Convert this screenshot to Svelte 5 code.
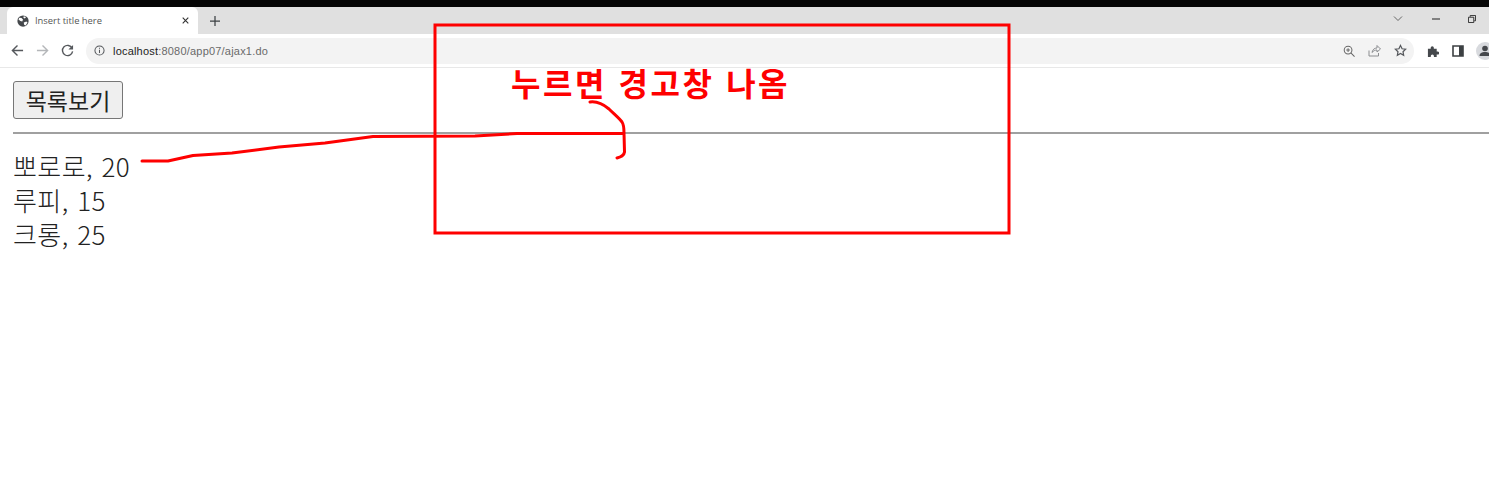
<script>
  const people = ['뽀로로, 20', '루피, 15', '크롱, 25'];
</script>

<div class="page">
  <div class="blackbar"></div>
  <div class="tabstrip">
    <div class="tab">
      <svg class="fav" viewBox="0 0 16 16" width="12" height="12"><circle cx="8" cy="8" r="7.500" fill="#45484c"/><path d="M3 3.500l3 .5 2 2-1 2.500-2.500-.5L2 6zM9 1.500l3 1-1.500 2-2-1zM9 10l3.500-1.500L14 10l-2.500 4-2-1z" fill="#fff"/></svg>
      <span class="tabtitle">Insert title here</span>
      <svg class="tabx" viewBox="0 0 10 10" width="7" height="7"><path d="M1 1l8 8M9 1l-8 8" stroke="#333" stroke-width="1.600"/></svg>
    </div>
    <svg class="plus" viewBox="0 0 12 12" width="10" height="10"><path d="M6 0v12M0 6h12" stroke="#3c4043" stroke-width="1.500"/></svg>
    <div class="spacer"></div>
    <svg class="winicon chev" viewBox="0 0 10 6" width="10" height="6"><path d="M1 .5l4 4 4-4" fill="none" stroke="#666" stroke-width="1"/></svg>
    <svg class="winicon min" viewBox="0 0 8 2" width="8" height="2"><path d="M0 1h8" stroke="#222" stroke-width="1"/></svg>
    <svg class="winicon rest" viewBox="0 0 9 9" width="8" height="8"><path d="M2.500 2V.5h6v6H7M.5 2.500h6v6h-6z" fill="none" stroke="#222" stroke-width="1"/></svg>
  </div>
  <div class="toolbar">
    <svg class="nav" viewBox="0 0 14 14" width="13" height="13"><path d="M13 7H2M7 1.500L1.500 7 7 12.500" fill="none" stroke="#55585c" stroke-width="1.500"/></svg>
    <svg class="nav" viewBox="0 0 14 14" width="13" height="13"><path d="M1 7h11M7 1.500L12.500 7 7 12.500" fill="none" stroke="#b4b6b9" stroke-width="1.500"/></svg>
    <svg class="nav" viewBox="0 0 14 14" width="13" height="13"><path d="M12 4.500A5.500 5.500 0 1 0 12.500 8" fill="none" stroke="#55585c" stroke-width="1.500"/><path d="M13 1v5H8z" fill="#55585c"/></svg>
    <div class="omnibox">
      <svg class="info" viewBox="0 0 12 12" width="11" height="11"><circle cx="6" cy="6" r="5" fill="none" stroke="#55585c" stroke-width="1.100"/><path d="M6 5.200v3.600M6 3v1.200" stroke="#55585c" stroke-width="1.100"/></svg>
      <span class="url"><span class="host">localhost</span>:8080/app07/ajax1.do</span>
      <div class="spacer"></div>
      <svg viewBox="0 0 13 13" width="12" height="12"><circle cx="5.500" cy="5.500" r="4.200" fill="none" stroke="#666" stroke-width="1.100"/><path d="M8.500 8.500L12.500 12.500M3.500 5.500h4M5.500 3.500v4" stroke="#666" stroke-width="1.100"/></svg>
      <svg viewBox="0 0 13 13" width="13" height="13"><path d="M1 6.500V12h9.500V9M4 8.500C4.500 5.500 6.500 4 9 4V1.500L12.500 5 9 8V6c-2 0-3.500 .8-5 2.500z" fill="none" stroke="#8b8d90" stroke-width="1"/></svg>
      <svg viewBox="0 0 14 14" width="13" height="13"><path d="M7 1.500l1.700 3.600 3.800.5-2.800 2.700.7 3.900L7 10.300l-3.400 1.900.7-3.900L1.500 5.600l3.800-.5z" fill="none" stroke="#55585c" stroke-width="1.300"/></svg>
    </div>
    <svg class="ext" viewBox="0 0 13 13" width="12" height="12"><path d="M1 4h3V3a1.700 1.700 0 0 1 3.400 0v1h3.100v3h1a1.700 1.700 0 0 1 0 3.400h-1V13H7.500v-1a1.700 1.700 0 0 0-3.400 0v1H1z" fill="#45484c"/></svg>
    <svg class="side" viewBox="0 0 12 12" width="12" height="12"><path d="M1 1h10v10H1z" fill="none" stroke="#3c4043" stroke-width="1.600"/><path d="M7 1h4v10H7z" fill="#3c4043"/></svg>
    <div class="avatar">
      <svg viewBox="0 0 14 14" width="14" height="14"><circle cx="7" cy="4.500" r="2.800" fill="#45484c"/><path d="M1.500 12c0-3 2.500-4 5.500-4s5.500 1 5.500 4z" fill="#45484c"/></svg>
    </div>
  </div>
  <main class="content">
    <button class="list">목록보기</button>
    <hr />
    <div class="people">
      {#each people as p}
        <div>{p}</div>
      {/each}
    </div>
  </main>

  <div class="note">누르면 경고창 나옴</div>
  <svg class="ink" width="1489" height="490" viewBox="0 0 1489 490">
    <rect x="435" y="25" width="574" height="208" fill="none" stroke="#fe0000" stroke-width="3"/>
    <path d="M142 161L168 161L193 155.500L232 153L279 147L325 143L373 136.500L475 136L517 133.500L623 133.500M590 102C597 101 603 104 609 109C614 114 619 118 622 122C624 125 624 128 624 133L624.500 152C624 156 621 157 617 158" fill="none" stroke="#fe0000" stroke-width="3" stroke-linecap="round" stroke-linejoin="round"/>
  </svg>
</div>

<style>
  :global(body) { margin: 0; background: #fff; overflow: hidden; }
  .page { position: relative; width: 1489px; height: 490px; overflow: hidden; font-family: "Noto Sans CJK KR", "Liberation Sans", sans-serif; color: #111; }
  .blackbar { height: 7px; background: #050505; }
  .tabstrip { height: 27px; background: #e0e0e0; display: flex; align-items: center; }
  .tab { width: 191px; height: 27px; margin-left: 7px; background: #fff; border-radius: 6px 6px 0 0; display: flex; align-items: center; box-sizing: border-box; padding: 0 9px 0 10px; }
  .fav { flex: none; }
  .tabtitle { margin-left: 6px; font: 9.400px "Open Sans", "Liberation Sans", sans-serif; color: #555; flex: 1; }
  .plus { margin-left: 12px; }
  .spacer { flex: 1; }
  .winicon { margin-bottom: 4px; }
  .chev { margin-right: 29px; }
  .min { margin-right: 28px; }
  .rest { margin-right: 13px; }
  .toolbar { height: 33px; background: #fff; border-bottom: 1px solid #e8e8e8; display: flex; align-items: center; }
  .nav { margin-left: 12px; flex: none; }
  .nav:first-child { margin-left: 11px; }
  .omnibox { width: 1328px; height: 26px; margin-left: 12px; border-radius: 13px; background: #f3f3f3; display: flex; align-items: center; gap: 13px; padding: 0 7px 0 8px; box-sizing: border-box; flex: none; }
  .omnibox .info { margin-right: -5px; }
  .url { font: 11px "Liberation Sans", sans-serif; letter-spacing: .2px; color: #6a6a6a; }
  .host { color: #222; }
  .ext { margin-left: 13px; flex: none; }
  .side { margin-left: 13px; flex: none; }
  .avatar { width: 18px; height: 18px; border-radius: 50%; background: #d8dade; margin-left: 12px; display: flex; align-items: center; justify-content: center; flex: none; }
  .content { padding: 13px 0 0 13px; }
  .list { display: block; width: 110px; height: 38px; padding: 0; border: 1px solid #767676; border-radius: 3px; background: #efefef; color: #222; font: 23px "Noto Sans CJK KR", sans-serif; }
  hr { margin: 13px 0 0; height: 2px; border: 0; background: #a0a0a0; }
  .people { margin-top: 15px; font-size: 26px; font-weight: 300; line-height: 34px; letter-spacing: .4px; word-spacing: 2.500px; color: #222; }
  .note { position: absolute; left: 511px; top: 60px; font-size: 32px; line-height: 44px; font-weight: 700; color: #fe0000; letter-spacing: 2.500px; word-spacing: 2px; white-space: nowrap; }
  .ink { position: absolute; left: 0; top: 0; pointer-events: none; }
</style>
